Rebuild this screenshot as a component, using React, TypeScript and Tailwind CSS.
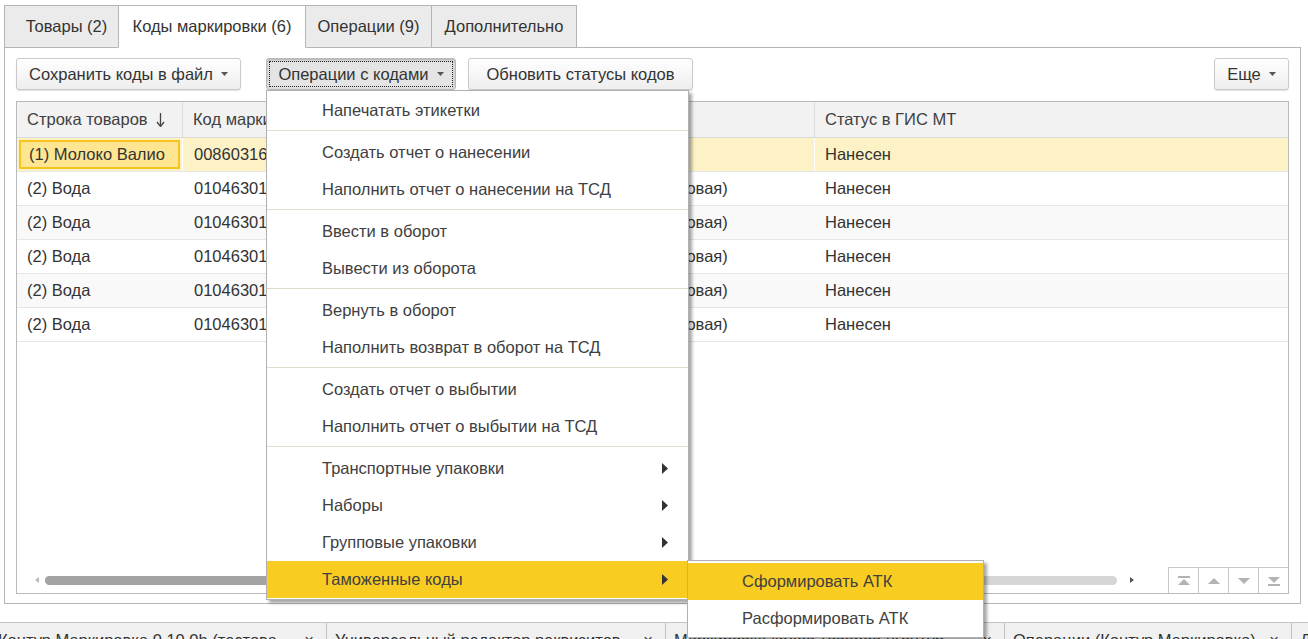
import React from "react";

const FONT = "font-['Liberation_Sans',Arial,sans-serif]";

const TOP_TABS = [
  { label: "Товары (2)", w: "w-[115px]", extra: "pl-[10px]" },
  { label: "Коды маркировки (6)", w: "w-[188px]", active: true },
  { label: "Операции (9)", w: "w-[127px]" },
  { label: "Дополнительно", w: "w-[146px]" },
];

const ROWS = [
  { item: "(1) Молоко Валио", code: "0086031600000000000000000", kind: "", status: "Нанесен", selected: true },
  { item: "(2) Вода", code: "0104630100000000000000000", kind: "Потребительская (групповая)", status: "Нанесен" },
  { item: "(2) Вода", code: "0104630100000000000000000", kind: "Потребительская (групповая)", status: "Нанесен" },
  { item: "(2) Вода", code: "0104630100000000000000000", kind: "Потребительская (групповая)", status: "Нанесен" },
  { item: "(2) Вода", code: "0104630100000000000000000", kind: "Потребительская (групповая)", status: "Нанесен" },
  { item: "(2) Вода", code: "0104630100000000000000000", kind: "Потребительская (групповая)", status: "Нанесен" },
];

type MenuEntry = { sep: true } | { label: string; sub?: boolean; hot?: boolean };

const MENU: MenuEntry[] = [
  { label: "Напечатать этикетки" },
  { sep: true },
  { label: "Создать отчет о нанесении" },
  { label: "Наполнить отчет о нанесении на ТСД" },
  { sep: true },
  { label: "Ввести в оборот" },
  { label: "Вывести из оборота" },
  { sep: true },
  { label: "Вернуть в оборот" },
  { label: "Наполнить возврат в оборот на ТСД" },
  { sep: true },
  { label: "Создать отчет о выбытии" },
  { label: "Наполнить отчет о выбытии на ТСД" },
  { sep: true },
  { label: "Транспортные упаковки", sub: true },
  { label: "Наборы", sub: true },
  { label: "Групповые упаковки", sub: true },
  { label: "Таможенные коды", sub: true, hot: true },
];

const BOTTOM_TABS = [
  { label: "Контур.Маркировка 0.10.0h (тестовая версия)", w: "w-[327px]", pl: "pl-0" },
  { label: "Универсальный редактор реквизитов", w: "w-[339px]", pl: "pl-[10px]" },
  { label: "Маркировка кодов товаров (Контур.Маркировка)", w: "w-[339px]", pl: "pl-[10px]" },
  { label: "Операции (Контур.Маркировка)", w: "w-[287px]", pl: "pl-[10px]" },
  { label: "Документ", w: "w-[200px]", pl: "pl-[10px]" },
];

function Caret() {
  return (
    <svg width="7" height="4" viewBox="0 0 7 4" className="shrink-0">
      <path d="M0 0h7L3.5 4z" fill="#555" />
    </svg>
  );
}

function Button({ children, w, pressed, caret }: { children: React.ReactNode; w: string; pressed?: boolean; caret?: boolean }) {
  return (
    <div
      className={`relative h-[32px] ${w} flex items-center justify-center gap-[8px] rounded-[3px] border text-[16.5px] text-[#333] ${
        pressed
          ? "border-[#b9b9b9] bg-[#e4e4e4] shadow-[inset_0_1px_3px_rgba(0,0,0,0.25)]"
          : "border-[#c9c9c9] bg-linear-to-b from-white to-[#eeeeee] shadow-[0_1px_1px_rgba(0,0,0,0.12)]"
      }`}
    >
      {pressed && <span className="absolute inset-[2px] border border-dotted border-[#222]" />}
      <span>{children}</span>
      {caret && <Caret />}
    </div>
  );
}

function SubArrow() {
  return (
    <svg width="6" height="11" viewBox="0 0 6 11">
      <path d="M0 0l6 5.5L0 11z" fill="#333" />
    </svg>
  );
}

function NavIcon({ kind }: { kind: "first" | "up" | "down" | "last" }) {
  return (
    <svg width="14" height="10" viewBox="0 0 14 10">
      {kind === "first" && (
        <>
          <rect x="1" y="0" width="12" height="2" fill="#b3b3b3" />
          <path d="M1 9l6-6 6 6z" fill="#b3b3b3" />
        </>
      )}
      {kind === "up" && <path d="M1 8l6-6 6 6z" fill="#b3b3b3" />}
      {kind === "down" && <path d="M1 2l6 6 6-6z" fill="#b3b3b3" />}
      {kind === "last" && (
        <>
          <path d="M1 1l6 6 6-6z" fill="#b3b3b3" />
          <rect x="1" y="8" width="12" height="2" fill="#b3b3b3" />
        </>
      )}
    </svg>
  );
}

export default function App() {
  return (
    <div className={`relative w-[1308px] h-[639px] overflow-hidden bg-white text-[#333] ${FONT} flex flex-col`}>
      {/* top tabs */}
      <div className="flex items-end pl-[4px] pt-[5px] h-[48px] shrink-0">
        {TOP_TABS.map((t, i) => (
          <div
            key={t.label}
            className={`${t.w} ${t.extra || ""} ${i > 0 ? "-ml-px" : ""} h-[43px] flex items-center justify-center border text-[16.5px] ${
              t.active ? "relative z-10 bg-white border-[#b5b5b5] border-b-white" : "bg-[#ebebeb] border-[#b5b5b5]"
            }`}
          >
            {t.label}
          </div>
        ))}
      </div>

      {/* panel */}
      <div className="-mt-px ml-[4px] w-[1297px] h-[557px] shrink-0 border border-[#b5b5b5] pt-[10px] px-[11px] pb-[9px] flex flex-col">
        <div className="flex items-start h-[32px]">
          <Button w="w-[225px]" caret>Сохранить коды в файл</Button>
          <div className="ml-[25px]">
            <Button w="w-[190px]" pressed caret>Операции с кодами</Button>
          </div>
          <div className="ml-[12px]">
            <Button w="w-[225px]">Обновить статусы кодов</Button>
          </div>
          <div className="ml-auto">
            <Button w="w-[75px]" caret>Еще</Button>
          </div>
        </div>

        {/* table */}
        <div className="mt-[11px] flex-1 border border-[#b9b9b9] flex flex-col text-[16.5px]">
          <div className="flex h-[36px] bg-[#f2f2f2] border-b border-[#d9d9d9] text-[#404040]">
            <div className="w-[166px] flex items-center gap-[8px] pl-[10px] border-r border-[#dcdcdc]">
              Строка товаров
              <svg width="9" height="14" viewBox="0 0 9 14">
                <path d="M4.5 0v12" stroke="#444" strokeWidth="1.3" />
                <path d="M1 9l3.5 4.5L8 9" stroke="#444" strokeWidth="1.3" fill="none" />
              </svg>
            </div>
            <div className="w-[309px] flex items-center pl-[10px] border-r border-[#dcdcdc]">Код маркировки</div>
            <div className="w-[323px] flex items-center pl-[10px] border-r border-[#dcdcdc]">Вид упаковки</div>
            <div className="flex-1 flex items-center pl-[10px]">Статус в ГИС МТ</div>
          </div>
          {ROWS.map((r, i) => (
            <div
              key={i}
              className={`flex h-[34px] border-b border-[#e6e6e6] ${
                r.selected ? "bg-[#fdf2c6]" : i % 2 === 0 ? "bg-[#f9f9f9]" : "bg-white"
              }`}
            >
              <div className={`w-[166px] flex ${r.selected ? "p-[2px] border-r border-white" : ""}`}>
                <div
                  className={`flex-1 flex items-center ${
                    r.selected ? "pl-[8px] border-2 border-[#f6c31f] bg-[#fde592]" : "pl-[10px]"
                  }`}
                >
                  {r.item}
                </div>
              </div>
              <div className={`w-[309px] flex items-center pl-[11px] ${r.selected ? "border-r border-white" : ""}`}>{r.code}</div>
              <div className={`w-[323px] flex items-center pl-[10px] ${r.selected ? "border-r border-white" : ""}`}>{r.kind}</div>
              <div className="flex-1 flex items-center pl-[10px]">{r.status}</div>
            </div>
          ))}
          <div className="flex-1" />
          <div className="h-[26px] flex items-center">
            <div className="w-[28px] flex justify-end pr-[6px]">
              <svg width="4" height="6" viewBox="0 0 4 6">
                <path d="M4 0L0 3l4 3z" fill="#bbb" />
              </svg>
            </div>
            <div className="w-[1072px] h-[9px] rounded-full bg-[#d6d6d6] flex">
              <div className="w-[420px] h-[9px] rounded-full bg-[#a3a3a3]" />
            </div>
            <div className="ml-[13px]">
              <svg width="4" height="6" viewBox="0 0 4 6">
                <path d="M0 0l4 3-4 3z" fill="#555" />
              </svg>
            </div>
            <div className="ml-auto flex h-[26px] border-t border-[#c9c9c9]">
              {(["first", "up", "down", "last"] as const).map((k) => (
                <div key={k} className="w-[30px] flex items-center justify-center border-l border-[#c9c9c9]">
                  <NavIcon kind={k} />
                </div>
              ))}
            </div>
          </div>
        </div>
      </div>

      {/* bottom window tabs */}
      <div className="mt-[18px] h-[40px] shrink-0 border-t border-[#c3c3c3] bg-[#f0f0f0] flex overflow-hidden">
        {BOTTOM_TABS.map((t) => (
          <div
            key={t.label}
            className={`${t.w} shrink-0 flex items-start pt-[5px] ${t.pl} pr-[12px] border-r border-[#c3c3c3] text-[16.5px] text-[#333]`}
          >
            <span className="flex-1 truncate -ml-[2px]">{t.label}</span>
            <span className="ml-[10px]">×</span>
          </div>
        ))}
      </div>

      {/* dropdown menu */}
      <div className="absolute left-[266px] top-[90px] w-[423px] bg-white border border-[#b0b0b0] pt-px pb-px shadow-[3px_3px_3px_rgba(0,0,0,0.35)] text-[16.5px] text-[#404040]">
        {MENU.map((m, i) =>
          "sep" in m ? (
            <div key={i} className="h-[5px] flex items-start pt-[1px]">
              <div className="w-full h-px bg-[#e2ddcb]" />
            </div>
          ) : (
            <div
              key={i}
              className={`h-[37px] flex items-center pl-[55px] pr-[20px] ${m.hot ? "bg-[#f9cc21]" : ""}`}
            >
              <span className="flex-1">{m.label}</span>
              {m.sub && <SubArrow />}
            </div>
          )
        )}
      </div>

      {/* submenu */}
      <div className="absolute left-[687px] top-[560px] w-[297px] bg-white border border-[#b0b0b0] pt-[2px] shadow-[3px_3px_3px_rgba(0,0,0,0.35)] text-[16.5px] text-[#404040]">
        <div className="h-[37px] flex items-center pl-[54px] bg-[#f9cc21]">Сформировать АТК</div>
        <div className="h-[37px] flex items-center pl-[54px]">Расформировать АТК</div>
      </div>
    </div>
  );
}
